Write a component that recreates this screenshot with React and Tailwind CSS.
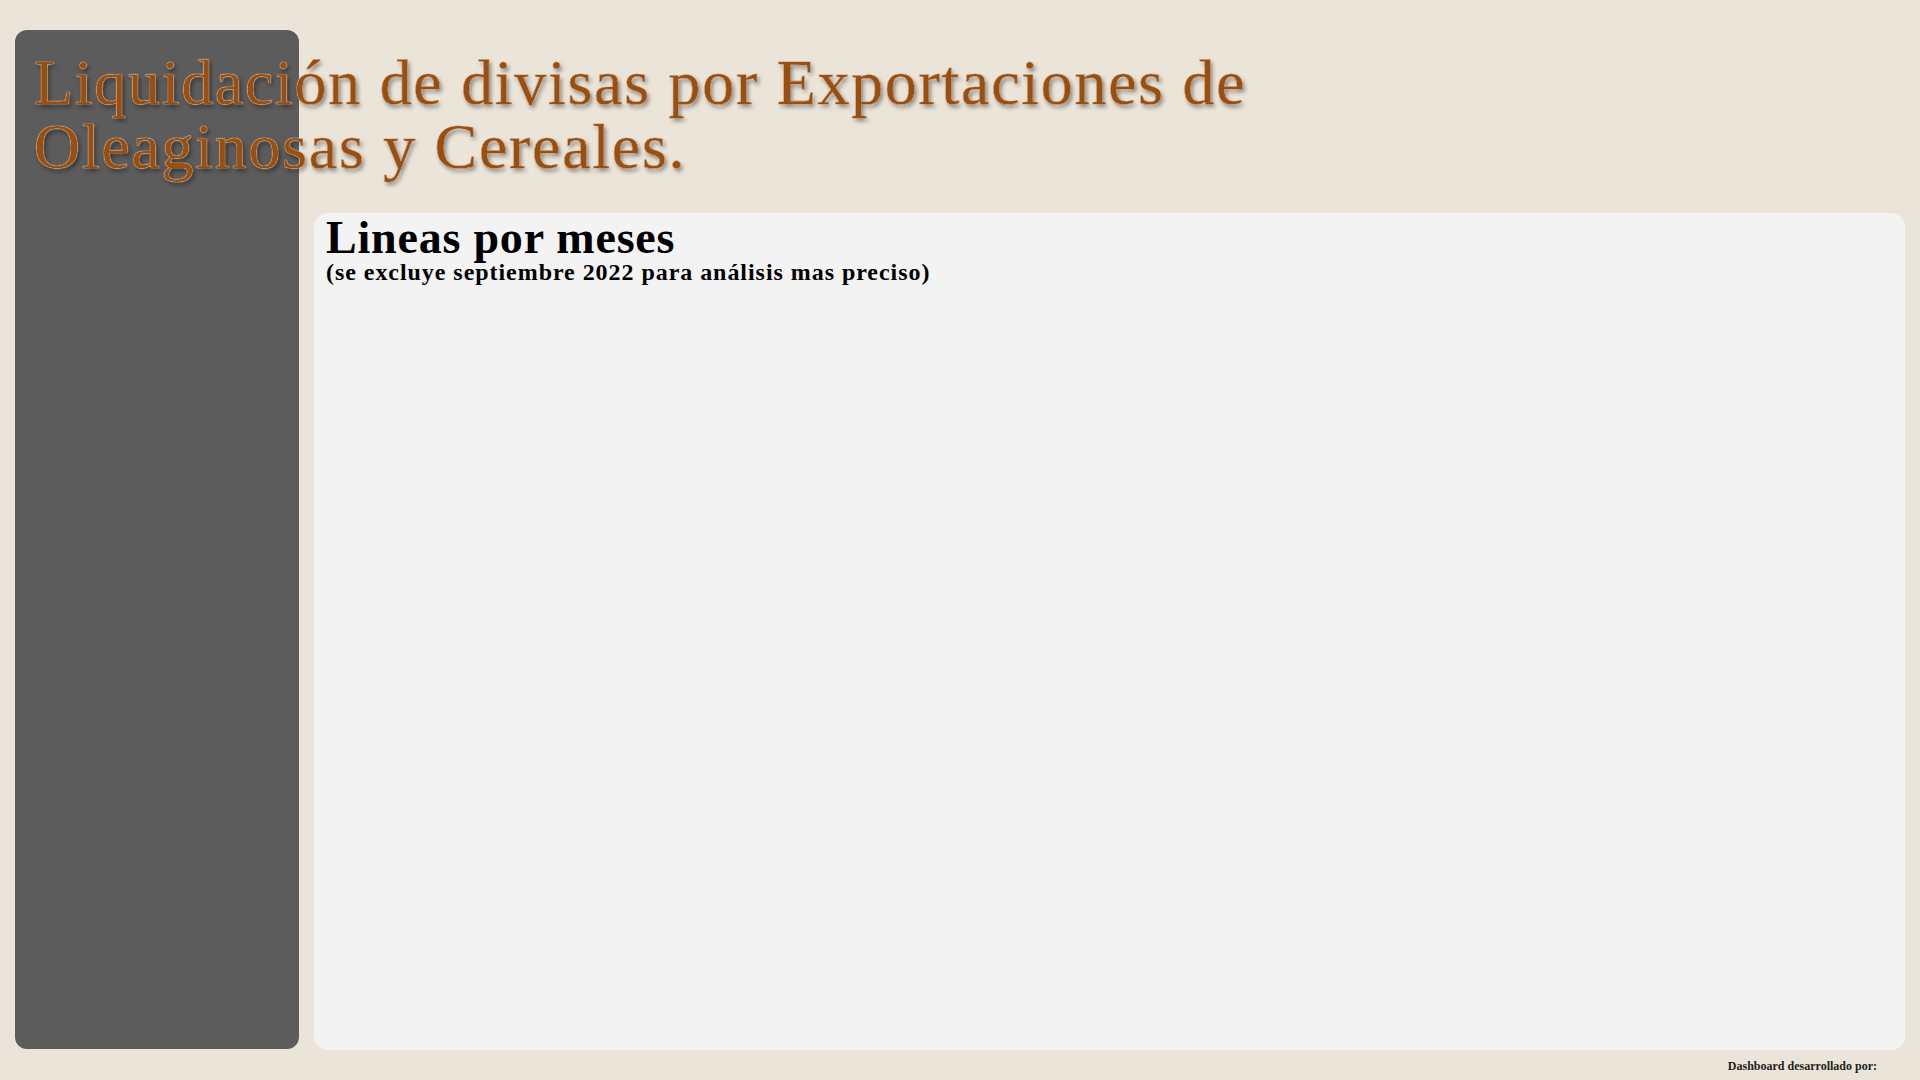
import React from "react";

const serif = "font-['Georgia','Liberation_Serif',serif]";

function App() {
  return (
    <div className={`relative w-[1920px] h-[1080px] bg-[#ebe4d9] flex pl-[15px] pt-[30px] overflow-hidden ${serif}`}>
      {/* Left panel */}
      <div className="w-[284px] h-[1019px] rounded-[12px] bg-[#5c5c5c] shrink-0" />

      {/* Right column */}
      <div className="flex flex-col ml-[15px] pt-[183px]">
        <div className="w-[1591px] h-[837px] rounded-[14px] bg-[#f3f3f3] pl-[12px] pt-[4px]">
          <h2 className="text-[46px] leading-[42px] tracking-[0.8px] font-bold text-black">Lineas por meses</h2>
          <p className="text-[24px] leading-[26px] tracking-[0.95px] font-bold text-black">
            (se excluye septiembre 2022 para análisis mas preciso)
          </p>
        </div>
        <div className="flex justify-end pr-[28px] pt-[9px]">
          <span className="text-[12px] leading-[14px] font-bold text-[#222]">Dashboard desarrollado por:</span>
        </div>
      </div>

      {/* Title sits over the panels */}
      <h1 className="absolute left-[34px] top-[51px] text-[64px] leading-[64px] tracking-[1.7px] text-[#9b4f0e] [-webkit-text-stroke:0.7px_#9b4f0e] [paint-order:stroke_fill] [text-shadow:0_0_1px_#fff,0_0_1px_#fff,2px_3px_4px_rgba(0,0,0,0.45)]">
        Liquidación de divisas por Exportaciones de
        <br />
        Oleaginosas y Cereales.
      </h1>
    </div>
  );
}

export default App;
